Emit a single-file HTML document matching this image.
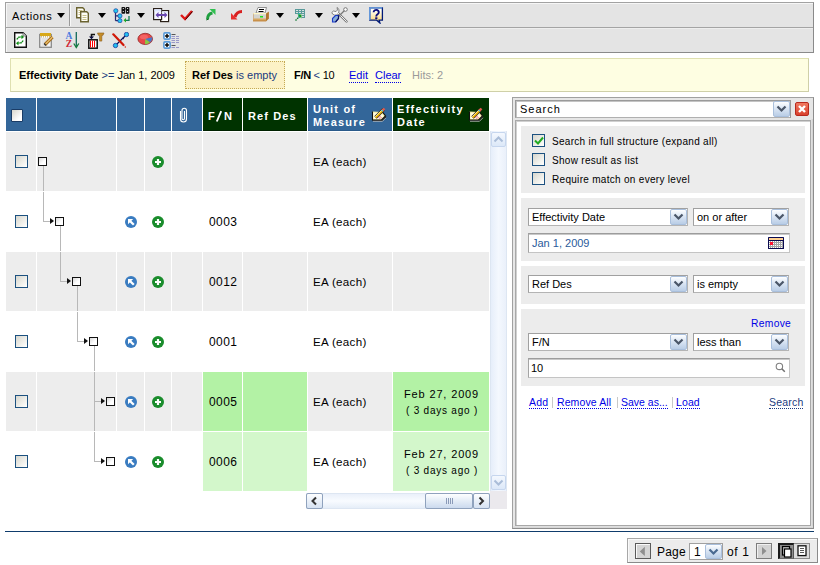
<!DOCTYPE html><html><head><meta charset="utf-8"><style>
*{box-sizing:border-box;margin:0;padding:0}
html,body{width:820px;height:565px;overflow:hidden;background:#fff}
body{position:relative;font-family:"Liberation Sans",sans-serif;font-size:11px;color:#000}
.a{position:absolute}
.t{position:absolute;white-space:nowrap;line-height:1}
.hd{position:absolute;color:#fff;font-weight:bold;font-size:11px;letter-spacing:1.1px;white-space:nowrap;line-height:13px}
.cb{position:absolute;width:13px;height:13px;border:1px solid #1c5180;background:linear-gradient(135deg,#d6d6ce 0%,#f4f4f0 70%,#fff 100%)}
.node{position:absolute;width:9px;height:9px;border:1px solid #111;background:linear-gradient(135deg,#d8d8d8 0%,#fff 60%)}
.vl{position:absolute;width:1px;background:#b8b8b8}
.hl{position:absolute;height:1px;background:#b8b8b8}
.arr{position:absolute;width:0;height:0;border-top:3.5px solid transparent;border-bottom:3.5px solid transparent;border-left:4px solid #111}
.sel{position:absolute;background:#fff;border:1px solid #a0a0a0;border-right-color:#b4b4b4;border-bottom-color:#b4b4b4}
.ddb{position:absolute;border:1px solid #a9bfdc;border-radius:2px;background:linear-gradient(#fdfeff 0%,#dbe6f4 45%,#b9cde6 100%)}
.lnk{position:absolute;white-space:nowrap;line-height:1;color:#0000e6;border-bottom:1px dotted #0000e6;padding-bottom:0}
.sep{position:absolute;width:1px;height:11px;background:#c8c8c8}
.sec{position:absolute;left:6px;width:284px;background:#ececec}
</style></head><body>
<div class="a" style="left:5px;top:2px;width:809px;height:51px;border:1px solid #a2a2a2;border-right-color:#8a8a8a;border-bottom-color:#8a8a8a;background:#e4e4e4;box-shadow:inset 1px 1px 0 #f6f6f6"></div>
<div class="a" style="left:6px;top:27px;width:807px;height:1px;background:#a4a4a4"></div>
<div class="a" style="left:6px;top:28px;width:807px;height:1px;background:#eeeeee"></div>
<div class="t" style="left:12px;top:11px;font-size:11px;letter-spacing:0.6px">Actions</div>
<div class="a" style="left:57px;top:13px;width:0;height:0;border-left:4px solid transparent;border-right:4px solid transparent;border-top:5px solid #000"></div>
<div class="a" style="left:69px;top:4px;width:1px;height:22px;background:#9a9a9a"></div>
<div class="a" style="left:70px;top:4px;width:1px;height:22px;background:#f8f8f8"></div>
<svg class="a" style="left:75px;top:6px" width="16" height="17" viewBox="0 0 16 17"><path d="M1.7 1.7h6l1.6 1.6v8.4h-7.6z" fill="#fffef6" stroke="#6b6330" stroke-width="1.4"/><path d="M3.5 4.5h4M3.5 6.5h4M3.5 8.5h4" stroke="#c8c08a" stroke-width="1"/><path d="M5.7 5.7h6l1.6 1.6v8.4h-7.6z" fill="#fffef6" stroke="#6b6330" stroke-width="1.4"/><path d="M7.5 9.5h4M7.5 11.5h4M7.5 13.5h4" stroke="#c8c08a" stroke-width="1"/></svg>
<div class="a" style="left:98px;top:13px;width:0;height:0;border-left:4px solid transparent;border-right:4px solid transparent;border-top:5px solid #000"></div>
<svg class="a" style="left:113px;top:6px" width="18" height="17" viewBox="0 0 18 17"><path d="M2.5 5v9.7M2.5 9.9h4M2.5 14.7h4" stroke="#2a2a70" stroke-width="1.2" fill="none"/><circle cx="2.8" cy="4.8" r="2.1" fill="#22c8f0" stroke="#1a3aa0" stroke-width="0.7"/><circle cx="6.9" cy="9.9" r="2.1" fill="#22c8f0" stroke="#1a3aa0" stroke-width="0.7"/><circle cx="6.9" cy="14.7" r="2.1" fill="#22c8f0" stroke="#1a3aa0" stroke-width="0.7"/><rect x="8.5" y="1" width="3.6" height="6.7" rx="0.8" fill="#111"/><rect x="12.8" y="1" width="3.6" height="6.7" rx="0.8" fill="#111"/><path d="M11.9 3h1" stroke="#111"/><circle cx="10.3" cy="2.5" r="0.6" fill="#fff"/><circle cx="14.6" cy="2.5" r="0.6" fill="#fff"/><circle cx="10.3" cy="5.5" r="0.6" fill="#fff"/><circle cx="14.6" cy="5.5" r="0.6" fill="#fff"/><path d="M16 10v4.3h-4" stroke="#117755" stroke-width="1.3" fill="none"/><path d="M13 12l-2.5 2.3 2.5 2.3z" fill="#22aa22"/></svg>
<div class="a" style="left:137px;top:13px;width:0;height:0;border-left:4px solid transparent;border-right:4px solid transparent;border-top:5px solid #000"></div>
<svg class="a" style="left:153px;top:8px" width="17" height="15" viewBox="0 0 17 15"><rect x="7.6" y="2.6" width="8" height="11" fill="#fff" stroke="#2a2018" stroke-width="1.2"/><rect x="0.6" y="0.6" width="8" height="11" fill="#f4f6ff" stroke="#2a2018" stroke-width="1.2"/><path d="M1.3 1.3h7v2h-7z" fill="#dde6ff"/><path d="M8.6 3.5h6.4v2h-6.4z" fill="#e6eeff"/><path d="M4.5 7h8" stroke="#6a48b0" stroke-width="2"/><path d="M2.5 7l3-3v6zM14.5 7l-3-3v6z" fill="#6a48b0"/></svg>
<svg class="a" style="left:180px;top:10px" width="13" height="11" viewBox="0 0 13 11"><path d="M1 5l4 4 7-8" stroke="#e01818" stroke-width="2.4" fill="none"/><path d="M5.5 9.5l7-8" stroke="#400000" stroke-width="1" fill="none"/></svg>
<svg class="a" style="left:205px;top:8px" width="11" height="13" viewBox="0 0 11 13"><path d="M2.5 11.5c0-4 1.5-6 5-6.5" stroke="#20a040" stroke-width="3" fill="none"/><path d="M4.5 1h6v6z" fill="#30c050"/><path d="M1.5 12l2-1" stroke="#106020" stroke-width="1"/></svg>
<svg class="a" style="left:230px;top:9px" width="13" height="11" viewBox="0 0 13 11"><path d="M12 2.5c-4 0-6 2-7 5.5" stroke="#d82020" stroke-width="3" fill="none"/><path d="M1 4v6.5h6.5z" fill="#e83030"/></svg>
<svg class="a" style="left:252px;top:6px" width="18" height="16" viewBox="0 0 18 16"><path d="M6 1.5h8.5l-1.5 5.5h-9z" fill="#fff" stroke="#777" stroke-width="0.8"/><path d="M7 3.5h5M6.5 5.5h5" stroke="#000" stroke-width="1"/><path d="M1 7.5h13l3-2v7l-3 3h-13z" fill="#c8904a"/><path d="M1.5 7.5h12.5v6h-12.5z" fill="#d4d4d0"/><path d="M1.5 7h12.5v1.3h-12.5z" fill="#fff8c8"/><path d="M1.5 12.5h12.5v1.5h-12.5z" fill="#d8a860"/><rect x="8" y="10" width="3" height="1.5" fill="#20e020"/><path d="M14 8l2.5-2v6.5l-2.5 2.5z" fill="#b07830"/></svg>
<div class="a" style="left:276px;top:13px;width:0;height:0;border-left:4px solid transparent;border-right:4px solid transparent;border-top:5px solid #000"></div>
<svg class="a" style="left:294px;top:8px" width="12" height="14" viewBox="0 0 12 14"><rect x="1" y="1" width="10" height="9" fill="#5a9a9a"/><path d="M2 2.5h2M5 2.5h2M8 2.5h2M2 4.5h2M5 4.5h2M8 4.5h2M8 6.5h2M8 8.5h2" stroke="#e8e8e8" stroke-width="0.9"/><path d="M1 6h7v4h-7z" fill="#e4e4e4"/><path d="M5 5v5" stroke="#22b8b8" stroke-width="1.2"/><path d="M1.5 12.5l4-4" stroke="#117733" stroke-width="1.4" stroke-dasharray="1.5 0.8"/><path d="M3.5 6.5h4v4z" fill="#129a22"/></svg>
<div class="a" style="left:315px;top:13px;width:0;height:0;border-left:4px solid transparent;border-right:4px solid transparent;border-top:5px solid #000"></div>
<svg class="a" style="left:331px;top:7px" width="17" height="17" viewBox="0 0 17 17"><path d="M6 5l9.5 9.5" stroke="#777" stroke-width="2.4" stroke-linecap="round"/><path d="M6 5l9.5 9.5" stroke="#fff" stroke-width="0.9" stroke-linecap="round"/><path d="M5.5 11.5L14.5 2.5" stroke="#777" stroke-width="1.2"/><circle cx="14.5" cy="2.5" r="1.8" fill="#fff" stroke="#777" stroke-width="1"/><path d="M0.8 5.5a3.5 3.5 0 0 0 6 1.5L8.5 8 9 7 7.5 5.5a3.5 3.5 0 0 0-1.5-5l0.5 2.5-1.5 1.5-2.5-0.5z" fill="#fafafa" stroke="#777" stroke-width="0.9"/><path d="M1.5 11.5l3-3h3v3l-3 3.5h-3z" fill="#8ab0d8" stroke="#1a3ac8" stroke-width="1.1"/><path d="M4.5 15l3-3.5v-3" stroke="#0a1060" stroke-width="1.2" fill="none"/></svg>
<div class="a" style="left:352px;top:13px;width:0;height:0;border-left:4px solid transparent;border-right:4px solid transparent;border-top:5px solid #000"></div>
<svg class="a" style="left:369px;top:7px" width="15" height="17" viewBox="0 0 15 17"><defs><linearGradient id="hg" x1="0" y1="0" x2="0" y2="1"><stop offset="0.2" stop-color="#fffef4"/><stop offset="1" stop-color="#ffd060"/></linearGradient></defs><path d="M0.8 0.8h12.6v12.4h-3.3l0.8 2.8-3.2-2.8h-6.9z" fill="url(#hg)" stroke="#001a78" stroke-width="1.3"/><path d="M0.8 13V0.8h12.4" stroke="#70a8e8" stroke-width="1.3" fill="none"/><path d="M4.6 5.2a2.6 2.3 0 1 1 4.2 1.8c-1.1 0.7-1.6 1.1-1.6 2.4" stroke="#0a0a78" stroke-width="1.9" fill="none"/><rect x="6.2" y="10.3" width="2.2" height="1.8" fill="#0a0a78"/></svg>
<svg class="a" style="left:13px;top:31px" width="16" height="18" viewBox="0 0 16 18"><path d="M1.7 1.7h8.3l3.3 3.3v11.3h-11.6z" fill="#fff" stroke="#111" stroke-width="1.4"/><path d="M10 1.7v3.3h3.3" fill="#ddd" stroke="#666" stroke-width="0.8"/><path d="M4.2 8.5a3 3 0 0 1 3-2.6h1.5" stroke="#118a18" stroke-width="1.5" fill="none" stroke-dasharray="1.6 0.6"/><path d="M8.5 3.8l2.5 2.2-2.5 2.2z" fill="#129018"/><path d="M9.8 9.5a3 3 0 0 1-3 2.6h-1.5" stroke="#118a18" stroke-width="1.5" fill="none" stroke-dasharray="1.6 0.6"/><path d="M5.5 10l-2.5 2.2 2.5 2.2z" fill="#129018"/></svg>
<svg class="a" style="left:39px;top:32px" width="16" height="17" viewBox="0 0 16 17"><rect x="0.7" y="2.5" width="11.6" height="12.8" fill="#f6f6f6" stroke="#8a8a8a" stroke-width="1.3"/><rect x="1" y="1" width="11" height="3" fill="#d8a818"/><path d="M2.5 4.5v0.8M4.5 4.5v0.8M6.5 4.5v0.8M8.5 4.5v0.8M10.5 4.5v0.8" stroke="#b08810" stroke-width="1"/><path d="M2.5 7h7M2.5 9h5M2.5 11h5M2.5 13h6" stroke="#c8c8c8" stroke-width="0.8"/><path d="M6 12.5l7.5-7.5" stroke="#a86c18" stroke-width="3.2"/><path d="M6 12.5l7.5-7.5" stroke="#e8c070" stroke-width="1.2"/><path d="M5.5 13l1-1" stroke="#333" stroke-width="2.5"/></svg>
<svg class="a" style="left:65px;top:31px" width="15" height="18" viewBox="0 0 15 18"><text x="4" y="7.8" font-family="Liberation Serif" font-weight="bold" font-size="9.5" text-anchor="middle" fill="#4a7ae0">A</text><text x="4" y="16" font-family="Liberation Serif" font-weight="bold" font-size="9.5" text-anchor="middle" fill="#d02838">Z</text><path d="M11.3 1v14.5" stroke="#116a5a" stroke-width="1.3"/><path d="M8.8 12.5l2.5 4 2.5-4" stroke="#117a3a" stroke-width="1.3" fill="none"/></svg>
<svg class="a" style="left:88px;top:32px" width="17" height="17" viewBox="0 0 17 17"><rect x="0.8" y="7.8" width="8.4" height="8.4" fill="#fff" stroke="#111" stroke-width="1.5"/><path d="M2.5 8.5v7M4.5 8.5v7M6.5 8.5v7" stroke="#ff0000" stroke-width="1"/><path d="M7 2.5h-3.5v3.5" stroke="#111" stroke-width="1.6" fill="none"/><path d="M1 4.5l2.5 2.8 2.5-2.8z" fill="#0a0a40"/><path d="M9.5 1h6.5l-1 2.3h-1.2v5.8h-2.2v-5.8h-1.2z" fill="#c8902a" stroke="#8a5a18" stroke-width="0.6"/></svg>
<svg class="a" style="left:112px;top:32px" width="17" height="17" viewBox="0 0 17 17"><path d="M3.5 13.5L14.5 2.5" stroke="#0a0a50" stroke-width="1.1"/><path d="M10 6l2.5-1-1 2.5z" fill="#0a1a60"/><circle cx="14.5" cy="2.5" r="2.2" fill="#22c0f0" stroke="#1a3aa0" stroke-width="0.8"/><circle cx="3.5" cy="13.5" r="2.2" fill="#22c0f0" stroke="#1a3aa0" stroke-width="0.8"/><path d="M1.3 2.3L11.5 13" stroke="#d01808" stroke-width="2.2" stroke-linecap="round"/><circle cx="13.3" cy="15" r="0.7" fill="#d01808"/></svg>
<svg class="a" style="left:137px;top:32px" width="17" height="14" viewBox="0 0 17 14"><ellipse cx="8.2" cy="6.9" rx="7.3" ry="5.6" fill="#e84848" stroke="#902828" stroke-width="0.8"/><ellipse cx="7" cy="5" rx="4" ry="2.2" fill="#ff8080" opacity="0.5"/><path d="M8.2 7l6.8-1.8a7.3 5.6 0 0 1-2 5z" fill="#4a78c8"/><path d="M8.2 7l4.8 3.2a7.3 5.6 0 0 1-5 2.1z" fill="#88cc44"/></svg>
<svg class="a" style="left:163px;top:32px" width="17" height="17" viewBox="0 0 17 17"><rect x="0.9" y="0.9" width="6.2" height="6.2" rx="1" fill="#fff" stroke="#5a9ad8" stroke-width="1.6"/><rect x="2" y="3.3" width="4" height="1.4" fill="#000"/><rect x="3.3" y="2" width="1.4" height="4" fill="#000"/><rect x="0.9" y="9.9" width="6.2" height="6.2" rx="1" fill="#fff" stroke="#5a9ad8" stroke-width="1.6"/><rect x="2" y="12.3" width="4" height="1.4" fill="#000"/><rect x="3.3" y="11" width="1.4" height="4" fill="#000"/><path d="M8.5 2.5h4M8.5 13.5h4" stroke="#555" stroke-width="1.1"/><path d="M8.5 4.5h3.5M13 4.5h3M8.5 6.5h3.5M13 6.5h3M8.5 8.5h3.5M13 8.5h3M8.5 10.5h3.5M13 10.5h3M8.5 15.5h3.5M13 15.5h3" stroke="#9a98c8" stroke-width="1"/></svg>
<div class="a" style="left:10px;top:58px;width:799px;height:34px;border:1px solid #dfe0b0;border-right-color:#cfd0a8;border-bottom-color:#cfd0a8;background:#fefee2"></div>
<div class="a" style="left:185px;top:61px;width:100px;height:28px;border:1px dotted #c4aa55;background:#fcf2c6"></div>
<div class="t" style="left:19px;top:70px;font-size:11px"><b>Effectivity Date</b> <span style="color:#1a3a80">&gt;=</span> Jan 1, 2009</div>
<div class="t" style="left:192px;top:70px;font-size:11px"><b>Ref Des</b> <span style="color:#1a3a80">is empty</span></div>
<div class="t" style="left:294px;top:70px;font-size:11px;letter-spacing:-0.3px"><b>F/N</b> <span style="color:#1a3a80;letter-spacing:0">&lt;</span> 10</div>
<div class="lnk" style="left:349px;top:70px;font-size:11px;padding-bottom:1px">Edit</div>
<div class="lnk" style="left:375px;top:70px;font-size:11px;padding-bottom:1px">Clear</div>
<div class="t" style="left:412px;top:70px;font-size:11px;color:#9a9a9a">Hits: 2</div>
<div class="a" style="left:6px;top:98px;width:30px;height:33px;background:#336699;border-bottom:1px solid #2a5a8a"></div>
<div class="a" style="left:37px;top:98px;width:79px;height:33px;background:#336699;border-bottom:1px solid #2a5a8a"></div>
<div class="a" style="left:117px;top:98px;width:27px;height:33px;background:#336699;border-bottom:1px solid #2a5a8a"></div>
<div class="a" style="left:145px;top:98px;width:26px;height:33px;background:#336699;border-bottom:1px solid #2a5a8a"></div>
<div class="a" style="left:172px;top:98px;width:30px;height:33px;background:#336699;border-bottom:1px solid #2a5a8a"></div>
<div class="a" style="left:203px;top:98px;width:39px;height:33px;background:#003300;border-bottom:1px solid #002200"></div>
<div class="a" style="left:243px;top:98px;width:64px;height:33px;background:#003300;border-bottom:1px solid #002200"></div>
<div class="a" style="left:308px;top:98px;width:84px;height:33px;background:#336699;border-bottom:1px solid #2a5a8a"></div>
<div class="a" style="left:393px;top:98px;width:96px;height:33px;background:#003300;border-bottom:1px solid #002200"></div>
<div class="a" style="left:6px;top:132px;width:30px;height:59px;background:#ededed"></div>
<div class="a" style="left:37px;top:132px;width:79px;height:59px;background:#ededed"></div>
<div class="a" style="left:117px;top:132px;width:27px;height:59px;background:#ededed"></div>
<div class="a" style="left:145px;top:132px;width:26px;height:59px;background:#ededed"></div>
<div class="a" style="left:172px;top:132px;width:30px;height:59px;background:#ededed"></div>
<div class="a" style="left:203px;top:132px;width:39px;height:59px;background:#ededed"></div>
<div class="a" style="left:243px;top:132px;width:64px;height:59px;background:#ededed"></div>
<div class="a" style="left:308px;top:132px;width:84px;height:59px;background:#ededed"></div>
<div class="a" style="left:393px;top:132px;width:96px;height:59px;background:#ededed"></div>
<div class="a" style="left:6px;top:252px;width:30px;height:59px;background:#ededed"></div>
<div class="a" style="left:37px;top:252px;width:79px;height:59px;background:#ededed"></div>
<div class="a" style="left:117px;top:252px;width:27px;height:59px;background:#ededed"></div>
<div class="a" style="left:145px;top:252px;width:26px;height:59px;background:#ededed"></div>
<div class="a" style="left:172px;top:252px;width:30px;height:59px;background:#ededed"></div>
<div class="a" style="left:203px;top:252px;width:39px;height:59px;background:#ededed"></div>
<div class="a" style="left:243px;top:252px;width:64px;height:59px;background:#ededed"></div>
<div class="a" style="left:308px;top:252px;width:84px;height:59px;background:#ededed"></div>
<div class="a" style="left:393px;top:252px;width:96px;height:59px;background:#ededed"></div>
<div class="a" style="left:6px;top:372px;width:30px;height:59px;background:#ededed"></div>
<div class="a" style="left:37px;top:372px;width:79px;height:59px;background:#ededed"></div>
<div class="a" style="left:117px;top:372px;width:27px;height:59px;background:#ededed"></div>
<div class="a" style="left:145px;top:372px;width:26px;height:59px;background:#ededed"></div>
<div class="a" style="left:172px;top:372px;width:30px;height:59px;background:#ededed"></div>
<div class="a" style="left:203px;top:372px;width:39px;height:59px;background:#b3f2a5"></div>
<div class="a" style="left:243px;top:372px;width:64px;height:59px;background:#b3f2a5"></div>
<div class="a" style="left:308px;top:372px;width:84px;height:59px;background:#ededed"></div>
<div class="a" style="left:393px;top:372px;width:96px;height:59px;background:#b3f2a5"></div>
<div class="a" style="left:203px;top:432px;width:39px;height:59px;background:#d3f7cb"></div>
<div class="a" style="left:243px;top:432px;width:64px;height:59px;background:#d3f7cb"></div>
<div class="a" style="left:393px;top:432px;width:96px;height:59px;background:#d3f7cb"></div>
<div class="cb" style="left:11px;top:109px;width:12px;height:13px;border:1px solid #1a3c66;border-radius:1px;background:linear-gradient(135deg,#d8d6cc,#fff 75%)"></div>
<svg class="a" style="left:176px;top:104px" width="14" height="20" viewBox="0 0 14 20"><path d="M4.5 7V15A3 3 0 0 0 10.5 15V6.5A2.25 2.25 0 0 0 6 6.5V14.5A1.25 1.25 0 0 0 8.5 14.5V7" stroke="#fff" stroke-width="1.1" fill="none"/></svg>
<div class="hd" style="left:208px;top:110px;letter-spacing:0">F</div>
<div class="hd" style="left:224px;top:110px;letter-spacing:0">N</div>
<svg class="a" style="left:215px;top:110px" width="8" height="13" viewBox="0 0 8 13"><path d="M1.8 11.5L6.2 1.2" stroke="#fff" stroke-width="1.9"/></svg>
<div class="hd" style="left:248px;top:110px">Ref Des</div>
<div class="hd" style="left:313px;top:103px;line-height:13px;letter-spacing:1.2px">Unit of<br>Measure</div>
<div class="hd" style="left:397px;top:103px;line-height:13px;letter-spacing:1.3px">Effectivity<br>Date</div>
<svg class="a" style="left:371px;top:106px" width="16" height="16" viewBox="0 0 16 16"><path d="M1.5 5.5v8.5h9l4-4-3-4" fill="#f4eca0" stroke="#111" stroke-width="1.1"/><path d="M2.3 6.5v6.5h7.5l3-3-2-2.5" fill="#fffde0"/><path d="M1.5 14.5h9.5l4-4" stroke="#222" stroke-width="1.2" fill="none"/><path d="M2 15.3h9.5l3.5-3.5" stroke="#bbb" stroke-width="0.8" fill="none"/><path d="M4.5 11.5L12.5 3.5" stroke="#222" stroke-width="3.4"/><path d="M4.5 11.5L12.5 3.5" stroke="#f0b400" stroke-width="2.2"/><path d="M4.2 10.8L11.8 3.2" stroke="#fff8c0" stroke-width="0.8"/><path d="M11.2 4.8l2.3-2.3" stroke="#e05a50" stroke-width="2.4"/><circle cx="11.3" cy="4.7" r="0.8" fill="#20d0f0"/><path d="M7 11.5l3-1.5M8 12.5l3-1" stroke="#e86080" stroke-width="0.7"/></svg>
<svg class="a" style="left:468px;top:106px" width="16" height="16" viewBox="0 0 16 16"><path d="M1.5 5.5v8.5h9l4-4-3-4" fill="#f4eca0" stroke="#111" stroke-width="1.1"/><path d="M2.3 6.5v6.5h7.5l3-3-2-2.5" fill="#fffde0"/><path d="M1.5 14.5h9.5l4-4" stroke="#222" stroke-width="1.2" fill="none"/><path d="M2 15.3h9.5l3.5-3.5" stroke="#bbb" stroke-width="0.8" fill="none"/><path d="M4.5 11.5L12.5 3.5" stroke="#222" stroke-width="3.4"/><path d="M4.5 11.5L12.5 3.5" stroke="#f0b400" stroke-width="2.2"/><path d="M4.2 10.8L11.8 3.2" stroke="#fff8c0" stroke-width="0.8"/><path d="M11.2 4.8l2.3-2.3" stroke="#e05a50" stroke-width="2.4"/><circle cx="11.3" cy="4.7" r="0.8" fill="#20d0f0"/><path d="M7 11.5l3-1.5M8 12.5l3-1" stroke="#e86080" stroke-width="0.7"/></svg>
<div class="cb" style="left:15px;top:155px"></div>
<div class="node" style="left:38px;top:157px"></div>
<svg class="a" style="left:152px;top:156px" width="12" height="12" viewBox="0 0 12 12"><circle cx="6" cy="6" r="6" fill="#1a8c2c"/><path d="M6 3v6M3 6h6" stroke="#fff" stroke-width="2.2"/></svg>
<div class="t" style="left:313px;top:156px;font-size:11.6px;letter-spacing:0.3px">EA (each)</div>
<div class="cb" style="left:15px;top:215px"></div>
<div class="node" style="left:55px;top:217px"></div>
<div class="arr" style="left:50px;top:218px"></div>
<div class="a" style="left:129px;top:216px;width:12px;height:12px;"></div>
<svg class="a" style="left:125px;top:216px" width="12" height="12" viewBox="0 0 12 12"><circle cx="6" cy="6" r="6" fill="#3a7cc0"/><path d="M3 3h5.2L3 8.2z" fill="#fff"/><path d="M5 5l3.8 3.8" stroke="#fff" stroke-width="2.3"/></svg>
<svg class="a" style="left:152px;top:216px" width="12" height="12" viewBox="0 0 12 12"><circle cx="6" cy="6" r="6" fill="#1a8c2c"/><path d="M6 3v6M3 6h6" stroke="#fff" stroke-width="2.2"/></svg>
<div class="t" style="left:209px;top:216px;font-size:12px;letter-spacing:0.4px">0003</div>
<div class="t" style="left:313px;top:216px;font-size:11.6px;letter-spacing:0.3px">EA (each)</div>
<div class="cb" style="left:15px;top:275px"></div>
<div class="node" style="left:72px;top:277px"></div>
<div class="arr" style="left:67px;top:278px"></div>
<div class="a" style="left:129px;top:276px;width:12px;height:12px;"></div>
<svg class="a" style="left:125px;top:276px" width="12" height="12" viewBox="0 0 12 12"><circle cx="6" cy="6" r="6" fill="#3a7cc0"/><path d="M3 3h5.2L3 8.2z" fill="#fff"/><path d="M5 5l3.8 3.8" stroke="#fff" stroke-width="2.3"/></svg>
<svg class="a" style="left:152px;top:276px" width="12" height="12" viewBox="0 0 12 12"><circle cx="6" cy="6" r="6" fill="#1a8c2c"/><path d="M6 3v6M3 6h6" stroke="#fff" stroke-width="2.2"/></svg>
<div class="t" style="left:209px;top:276px;font-size:12px;letter-spacing:0.4px">0012</div>
<div class="t" style="left:313px;top:276px;font-size:11.6px;letter-spacing:0.3px">EA (each)</div>
<div class="cb" style="left:15px;top:335px"></div>
<div class="node" style="left:89px;top:337px"></div>
<div class="arr" style="left:84px;top:338px"></div>
<div class="a" style="left:129px;top:336px;width:12px;height:12px;"></div>
<svg class="a" style="left:125px;top:336px" width="12" height="12" viewBox="0 0 12 12"><circle cx="6" cy="6" r="6" fill="#3a7cc0"/><path d="M3 3h5.2L3 8.2z" fill="#fff"/><path d="M5 5l3.8 3.8" stroke="#fff" stroke-width="2.3"/></svg>
<svg class="a" style="left:152px;top:336px" width="12" height="12" viewBox="0 0 12 12"><circle cx="6" cy="6" r="6" fill="#1a8c2c"/><path d="M6 3v6M3 6h6" stroke="#fff" stroke-width="2.2"/></svg>
<div class="t" style="left:209px;top:336px;font-size:12px;letter-spacing:0.4px">0001</div>
<div class="t" style="left:313px;top:336px;font-size:11.6px;letter-spacing:0.3px">EA (each)</div>
<div class="cb" style="left:15px;top:395px"></div>
<div class="node" style="left:106px;top:397px"></div>
<div class="arr" style="left:101px;top:398px"></div>
<div class="a" style="left:129px;top:396px;width:12px;height:12px;"></div>
<svg class="a" style="left:125px;top:396px" width="12" height="12" viewBox="0 0 12 12"><circle cx="6" cy="6" r="6" fill="#3a7cc0"/><path d="M3 3h5.2L3 8.2z" fill="#fff"/><path d="M5 5l3.8 3.8" stroke="#fff" stroke-width="2.3"/></svg>
<svg class="a" style="left:152px;top:396px" width="12" height="12" viewBox="0 0 12 12"><circle cx="6" cy="6" r="6" fill="#1a8c2c"/><path d="M6 3v6M3 6h6" stroke="#fff" stroke-width="2.2"/></svg>
<div class="t" style="left:209px;top:396px;font-size:12px;letter-spacing:0.4px">0005</div>
<div class="t" style="left:313px;top:396px;font-size:11.6px;letter-spacing:0.3px">EA (each)</div>
<div class="t" style="left:404px;top:389px;font-size:11px;letter-spacing:0.85px">Feb 27, 2009</div>
<div class="t" style="left:406px;top:406px;font-size:10px;letter-spacing:0.78px">( 3 days ago )</div>
<div class="cb" style="left:15px;top:455px"></div>
<div class="node" style="left:106px;top:457px"></div>
<div class="arr" style="left:101px;top:458px"></div>
<div class="a" style="left:129px;top:456px;width:12px;height:12px;"></div>
<svg class="a" style="left:125px;top:456px" width="12" height="12" viewBox="0 0 12 12"><circle cx="6" cy="6" r="6" fill="#3a7cc0"/><path d="M3 3h5.2L3 8.2z" fill="#fff"/><path d="M5 5l3.8 3.8" stroke="#fff" stroke-width="2.3"/></svg>
<svg class="a" style="left:152px;top:456px" width="12" height="12" viewBox="0 0 12 12"><circle cx="6" cy="6" r="6" fill="#1a8c2c"/><path d="M6 3v6M3 6h6" stroke="#fff" stroke-width="2.2"/></svg>
<div class="t" style="left:209px;top:456px;font-size:12px;letter-spacing:0.4px">0006</div>
<div class="t" style="left:313px;top:456px;font-size:11.6px;letter-spacing:0.3px">EA (each)</div>
<div class="t" style="left:404px;top:449px;font-size:11px;letter-spacing:0.85px">Feb 27, 2009</div>
<div class="t" style="left:406px;top:466px;font-size:10px;letter-spacing:0.78px">( 3 days ago )</div>
<div class="vl" style="left:43px;top:166px;height:25px"></div>
<div class="vl" style="left:43px;top:192px;height:30px"></div>
<div class="hl" style="left:43px;top:221px;width:7px"></div>
<div class="vl" style="left:60px;top:226px;height:25px"></div>
<div class="vl" style="left:60px;top:252px;height:30px"></div>
<div class="hl" style="left:60px;top:281px;width:7px"></div>
<div class="vl" style="left:77px;top:286px;height:25px"></div>
<div class="vl" style="left:77px;top:312px;height:30px"></div>
<div class="hl" style="left:77px;top:341px;width:7px"></div>
<div class="vl" style="left:94px;top:346px;height:25px"></div>
<div class="vl" style="left:94px;top:372px;height:59px"></div>
<div class="hl" style="left:94px;top:401px;width:7px"></div>
<div class="vl" style="left:94px;top:432px;height:30px"></div>
<div class="hl" style="left:94px;top:461px;width:7px"></div>
<div class="a" style="left:490px;top:131px;width:17px;height:360px;background:linear-gradient(90deg,#e6eefa,#f4f8fe 50%,#eaf0fa);border-left:1px solid #dde6f2;border-right:1px solid #dde6f2"></div>
<div class="a" style="left:491px;top:132px;width:15px;height:15px;border:1px solid #c6d6ee;border-radius:2px;background:linear-gradient(#f4f8fe,#dce8f8)"></div>
<svg class="a" style="left:493px;top:135px" width="11" height="8" viewBox="0 0 11 8"><path d="M1.5 6.5L5.5 2.5 9.5 6.5" stroke="#aabdd8" stroke-width="2" fill="none"/></svg>
<div class="a" style="left:491px;top:475px;width:15px;height:15px;border:1px solid #c6d6ee;border-radius:2px;background:linear-gradient(#f4f8fe,#dce8f8)"></div>
<svg class="a" style="left:493px;top:479px" width="11" height="8" viewBox="0 0 11 8"><path d="M1.5 1.5L5.5 5.5 9.5 1.5" stroke="#aabdd8" stroke-width="2" fill="none"/></svg>
<div class="a" style="left:306px;top:493px;width:184px;height:16px;background:linear-gradient(#eaf0fa,#f8fbff 50%,#e6eef8);border-top:1px solid #dde6f2;border-bottom:1px solid #dde6f2"></div>
<div class="a" style="left:490px;top:491px;width:17px;height:18px;background:#ebe9ed"></div>
<div class="a" style="left:306px;top:493px;width:17px;height:16px;border:1px solid #8fa2bd;border-radius:2px;background:linear-gradient(#fdfeff,#d6e2f2)"></div>
<svg class="a" style="left:310px;top:496px" width="9" height="10" viewBox="0 0 9 10"><path d="M6 1.5L2.5 5 6 8.5" stroke="#333" stroke-width="2" fill="none"/></svg>
<div class="a" style="left:425px;top:493px;width:48px;height:16px;border:1px solid #8fa2bd;border-radius:2px;background:linear-gradient(#fdfeff,#cbdaee)"></div>
<div class="a" style="left:446px;top:498px;width:7px;height:6px;background:repeating-linear-gradient(90deg,#8a9ab8 0 1px,transparent 1px 2px)"></div>
<div class="a" style="left:473px;top:493px;width:17px;height:16px;border:1px solid #8fa2bd;border-radius:2px;background:linear-gradient(#fdfeff,#d6e2f2)"></div>
<svg class="a" style="left:477px;top:496px" width="9" height="10" viewBox="0 0 9 10"><path d="M2.5 1.5L6 5 2.5 8.5" stroke="#333" stroke-width="2" fill="none"/></svg>
<div class="a" style="left:5px;top:531px;width:809px;height:1px;background:#0f3c6c"></div>
<div class="a" style="left:512px;top:97px;width:302px;height:432px;border:1px solid #a0a0a0;border-right-color:#8c8c8c;border-bottom-color:#8c8c8c;background:#e6e6e6"></div>
<div class="a" style="left:515px;top:100px;width:276px;height:18px;background:#fff;border:1px solid #9a9a9a;border-right:0;border-bottom-color:#b0b0b0"></div>
<div class="a" style="left:516px;top:101px;width:1px;height:16px;background:#c4c4c4"></div>
<div class="a" style="left:516px;top:101px;width:274px;height:1px;background:#c4c4c4"></div>
<div class="a" style="left:790px;top:100px;width:1px;height:18px;background:#9a9a9a"></div>
<div class="t" style="left:520px;top:104px;font-size:11px;letter-spacing:1px">Search</div>
<div class="ddb" style="left:773px;top:101px;width:17px;height:16px"></div>
<svg class="a" style="left:776px;top:105px" width="11" height="8" viewBox="0 0 11 8"><path d="M1.5 1.5L5.5 5.5 9.5 1.5" stroke="#4a5668" stroke-width="2.2" fill="none"/></svg>
<div class="a" style="left:795px;top:102px;width:14px;height:14px;border:1px solid #b8281c;border-radius:2px;background:linear-gradient(#f07a60,#d8402c)"></div>
<svg class="a" style="left:797px;top:104px" width="10" height="10" viewBox="0 0 10 10"><path d="M2 2l6 6M8 2l-6 6" stroke="#fff" stroke-width="2.4"/></svg>
<div class="a" style="left:811px;top:119px;width:2px;height:409px;background:linear-gradient(90deg,#e4e4e4,#cfcfcf)"></div>
<div class="a" style="left:513px;top:526px;width:300px;height:2px;background:linear-gradient(#e4e4e4,#d2d2d2)"></div>
<div class="a" style="left:515px;top:120px;width:296px;height:406px;background:#fff;border:1px solid #a8a8a8;box-shadow:inset 1px 1px 0 #d0d0d0"></div>
<div class="a" style="left:521px;top:126px;width:284px;height:67px;background:#ececec"></div>
<div class="a" style="left:521px;top:198px;width:284px;height:63px;background:#ececec"></div>
<div class="a" style="left:521px;top:266px;width:284px;height:38px;background:#ececec"></div>
<div class="a" style="left:521px;top:309px;width:284px;height:77px;background:#ececec"></div>
<div class="cb" style="left:532px;top:134px"></div>
<svg class="a" style="left:534px;top:136px" width="10" height="9" viewBox="0 0 10 9"><path d="M1 4.5l3 3 5-6" stroke="#22aa22" stroke-width="2" fill="none"/></svg>
<div class="t" style="left:552px;top:137px;font-size:10px;letter-spacing:0.3px">Search in full structure (expand all)</div>
<div class="cb" style="left:532px;top:153px"></div>
<div class="t" style="left:552px;top:156px;font-size:10px;letter-spacing:0.3px">Show result as list</div>
<div class="cb" style="left:532px;top:172px"></div>
<div class="t" style="left:552px;top:175px;font-size:10px;letter-spacing:0.3px">Require match on every level</div>
<div class="sel" style="left:528px;top:208px;width:160px;height:18px"></div>
<div class="ddb" style="left:670px;top:209px;width:17px;height:16px"></div>
<svg class="a" style="left:673px;top:213px" width="11" height="8" viewBox="0 0 11 8"><path d="M1.5 1.5L5.5 5.5 9.5 1.5" stroke="#4a5668" stroke-width="2.2" fill="none"/></svg>
<div class="t" style="left:532px;top:212px;font-size:11px">Effectivity Date</div>
<div class="sel" style="left:693px;top:208px;width:96px;height:18px"></div>
<div class="ddb" style="left:771px;top:209px;width:17px;height:16px"></div>
<svg class="a" style="left:774px;top:213px" width="11" height="8" viewBox="0 0 11 8"><path d="M1.5 1.5L5.5 5.5 9.5 1.5" stroke="#4a5668" stroke-width="2.2" fill="none"/></svg>
<div class="t" style="left:697px;top:212px;font-size:11px">on or after</div>
<div class="sel" style="left:528px;top:233px;width:262px;height:20px;border-color:#9c9c9c #c4c4c4 #c4c4c4 #a4a4a4;box-shadow:inset 0 1px 0 #c8c8c8"></div>
<div class="t" style="left:532px;top:238px;font-size:11px;color:#2a5a9a">Jan 1, 2009</div>
<svg class="a" style="left:768px;top:237px" width="16" height="12" viewBox="0 0 16 12"><rect x="0" y="0" width="16" height="12" rx="0.5" fill="#0a0a50"/><rect x="1" y="1" width="14" height="2" fill="#ffd090"/><rect x="1" y="4" width="14" height="7" fill="#a4a4a4"/><rect x="1" y="4" width="1" height="1" fill="#fff"/><rect x="1" y="6" width="1" height="1" fill="#fff"/><rect x="1" y="8" width="1" height="1" fill="#fff"/><rect x="1" y="10" width="1" height="1" fill="#fff"/><rect x="3" y="4" width="1" height="1" fill="#fff"/><rect x="3" y="6" width="1" height="1" fill="#fff"/><rect x="3" y="8" width="1" height="1" fill="#fff"/><rect x="3" y="10" width="1" height="1" fill="#fff"/><rect x="5" y="4" width="1" height="1" fill="#fff"/><rect x="5" y="6" width="1" height="1" fill="#fff"/><rect x="5" y="8" width="1" height="1" fill="#fff"/><rect x="5" y="10" width="1" height="1" fill="#fff"/><rect x="7" y="4" width="1" height="1" fill="#fff"/><rect x="7" y="6" width="1" height="1" fill="#fff"/><rect x="7" y="8" width="1" height="1" fill="#fff"/><rect x="7" y="10" width="1" height="1" fill="#fff"/><rect x="9" y="4" width="1" height="1" fill="#fff"/><rect x="9" y="6" width="1" height="1" fill="#fff"/><rect x="9" y="8" width="1" height="1" fill="#fff"/><rect x="9" y="10" width="1" height="1" fill="#fff"/><rect x="11" y="4" width="1" height="1" fill="#fff"/><rect x="11" y="6" width="1" height="1" fill="#fff"/><rect x="11" y="8" width="1" height="1" fill="#fff"/><rect x="11" y="10" width="1" height="1" fill="#fff"/><rect x="13" y="4" width="1" height="1" fill="#fff"/><rect x="13" y="6" width="1" height="1" fill="#fff"/><rect x="13" y="8" width="1" height="1" fill="#fff"/><rect x="13" y="10" width="1" height="1" fill="#fff"/><rect x="2" y="5" width="3" height="3" fill="#ff1030"/></svg>
<div class="sel" style="left:528px;top:275px;width:160px;height:18px"></div>
<div class="ddb" style="left:670px;top:276px;width:17px;height:16px"></div>
<svg class="a" style="left:673px;top:280px" width="11" height="8" viewBox="0 0 11 8"><path d="M1.5 1.5L5.5 5.5 9.5 1.5" stroke="#4a5668" stroke-width="2.2" fill="none"/></svg>
<div class="t" style="left:532px;top:279px;font-size:11px">Ref Des</div>
<div class="sel" style="left:693px;top:275px;width:96px;height:18px"></div>
<div class="ddb" style="left:771px;top:276px;width:17px;height:16px"></div>
<svg class="a" style="left:774px;top:280px" width="11" height="8" viewBox="0 0 11 8"><path d="M1.5 1.5L5.5 5.5 9.5 1.5" stroke="#4a5668" stroke-width="2.2" fill="none"/></svg>
<div class="t" style="left:697px;top:279px;font-size:11px">is empty</div>
<div class="t" style="left:751px;top:319px;font-size:10.3px;letter-spacing:0.3px;color:#0000e6">Remove</div>
<div class="sel" style="left:528px;top:333px;width:160px;height:18px"></div>
<div class="ddb" style="left:670px;top:334px;width:17px;height:16px"></div>
<svg class="a" style="left:673px;top:338px" width="11" height="8" viewBox="0 0 11 8"><path d="M1.5 1.5L5.5 5.5 9.5 1.5" stroke="#4a5668" stroke-width="2.2" fill="none"/></svg>
<div class="t" style="left:532px;top:337px;font-size:11px">F/N</div>
<div class="sel" style="left:693px;top:333px;width:96px;height:18px"></div>
<div class="ddb" style="left:771px;top:334px;width:17px;height:16px"></div>
<svg class="a" style="left:774px;top:338px" width="11" height="8" viewBox="0 0 11 8"><path d="M1.5 1.5L5.5 5.5 9.5 1.5" stroke="#4a5668" stroke-width="2.2" fill="none"/></svg>
<div class="t" style="left:697px;top:337px;font-size:11px">less than</div>
<div class="sel" style="left:528px;top:358px;width:262px;height:20px;border-color:#9c9c9c #c4c4c4 #c4c4c4 #a4a4a4;box-shadow:inset 0 1px 0 #c8c8c8"></div>
<div class="t" style="left:531px;top:363px;font-size:11px">10</div>
<svg class="a" style="left:775px;top:362px" width="11" height="11" viewBox="0 0 11 11"><circle cx="4.4" cy="4.4" r="3.2" stroke="#808080" stroke-width="1.1" fill="none"/><path d="M6.8 6.8l3 3" stroke="#707070" stroke-width="1.5"/></svg>
<div class="lnk" style="left:529px;top:397px;font-size:10.5px;letter-spacing:0.2px">Add</div>
<div class="sep" style="left:552px;top:397px"></div>
<div class="lnk" style="left:557px;top:397px;font-size:10.5px;letter-spacing:0.1px">Remove All</div>
<div class="sep" style="left:617px;top:397px"></div>
<div class="lnk" style="left:621px;top:397px;font-size:10.5px;letter-spacing:0px">Save as...</div>
<div class="sep" style="left:672px;top:397px"></div>
<div class="lnk" style="left:676px;top:397px;font-size:10.5px;letter-spacing:0.1px">Load</div>
<div class="lnk" style="left:769px;top:397px;font-size:10.5px;letter-spacing:0.2px;color:#1a3a80;border-bottom-color:#1a3a80">Search</div>
<div class="a" style="left:627px;top:538px;width:191px;height:25px;border:1px solid #a8a8a8;border-right-color:#8a8a8a;border-bottom-color:#8a8a8a;background:#ececec;box-shadow:inset 1px 1px 0 #fafafa"></div>
<div class="a" style="left:635px;top:543px;width:16px;height:16px;border:1px solid #5a5a5a;background:#d4d4d4;box-shadow:inset 1px 1px 0 #fafafa"></div>
<svg class="a" style="left:639px;top:546px" width="8" height="11" viewBox="0 0 8 11"><path d="M5.8 0.8v9.2L0.8 5.4z" fill="#8e8e8e"/></svg>
<div class="t" style="left:657px;top:546px;font-size:12px;letter-spacing:0.2px">Page</div>
<div class="a" style="left:689px;top:543px;width:34px;height:17px;background:#fff;border:1px solid #a0a0a0"></div>
<div class="t" style="left:694px;top:546px;font-size:12px">1</div>
<div class="ddb" style="left:705px;top:544px;width:17px;height:15px"></div>
<svg class="a" style="left:708px;top:548px" width="11" height="8" viewBox="0 0 11 8"><path d="M1.5 1.5L5.5 5.5 9.5 1.5" stroke="#4a6a90" stroke-width="2.2" fill="none"/></svg>
<div class="t" style="left:727px;top:546px;font-size:12px;letter-spacing:0.6px">of 1</div>
<div class="a" style="left:756px;top:543px;width:16px;height:16px;border:1px solid #7c7c7c;background:#d2d2d2;box-shadow:inset 1px 1px 0 #f0f0f0"></div>
<svg class="a" style="left:760px;top:546px" width="8" height="10" viewBox="0 0 8 10"><path d="M2 1v8L6.5 5z" fill="#8e8e8e"/></svg>
<div class="a" style="left:778px;top:543px;width:32px;height:16px;border:1px solid #8a8a8a;background:#dcdcdc"></div>
<div class="a" style="left:778px;top:543px;width:16px;height:16px;border:2px solid #1a1a1a;border-right:1px solid #555;border-bottom:1px solid #666;background:#8e8e8e"></div>
<svg class="a" style="left:781px;top:545px" width="12" height="13" viewBox="0 0 12 13"><rect x="1.5" y="1.5" width="7" height="8.5" fill="#bbb" stroke="#000" stroke-width="1.2"/><rect x="3.5" y="4" width="6.5" height="8" fill="#fff" stroke="#000" stroke-width="1.2"/></svg>
<svg class="a" style="left:797px;top:545px" width="11" height="12" viewBox="0 0 11 12"><rect x="1" y="0.8" width="8" height="9.8" fill="#fff" stroke="#111" stroke-width="1.3"/><path d="M3 3.5h4M3 5.5h4M3 7.5h4" stroke="#444" stroke-width="0.9"/></svg>
</body></html>
